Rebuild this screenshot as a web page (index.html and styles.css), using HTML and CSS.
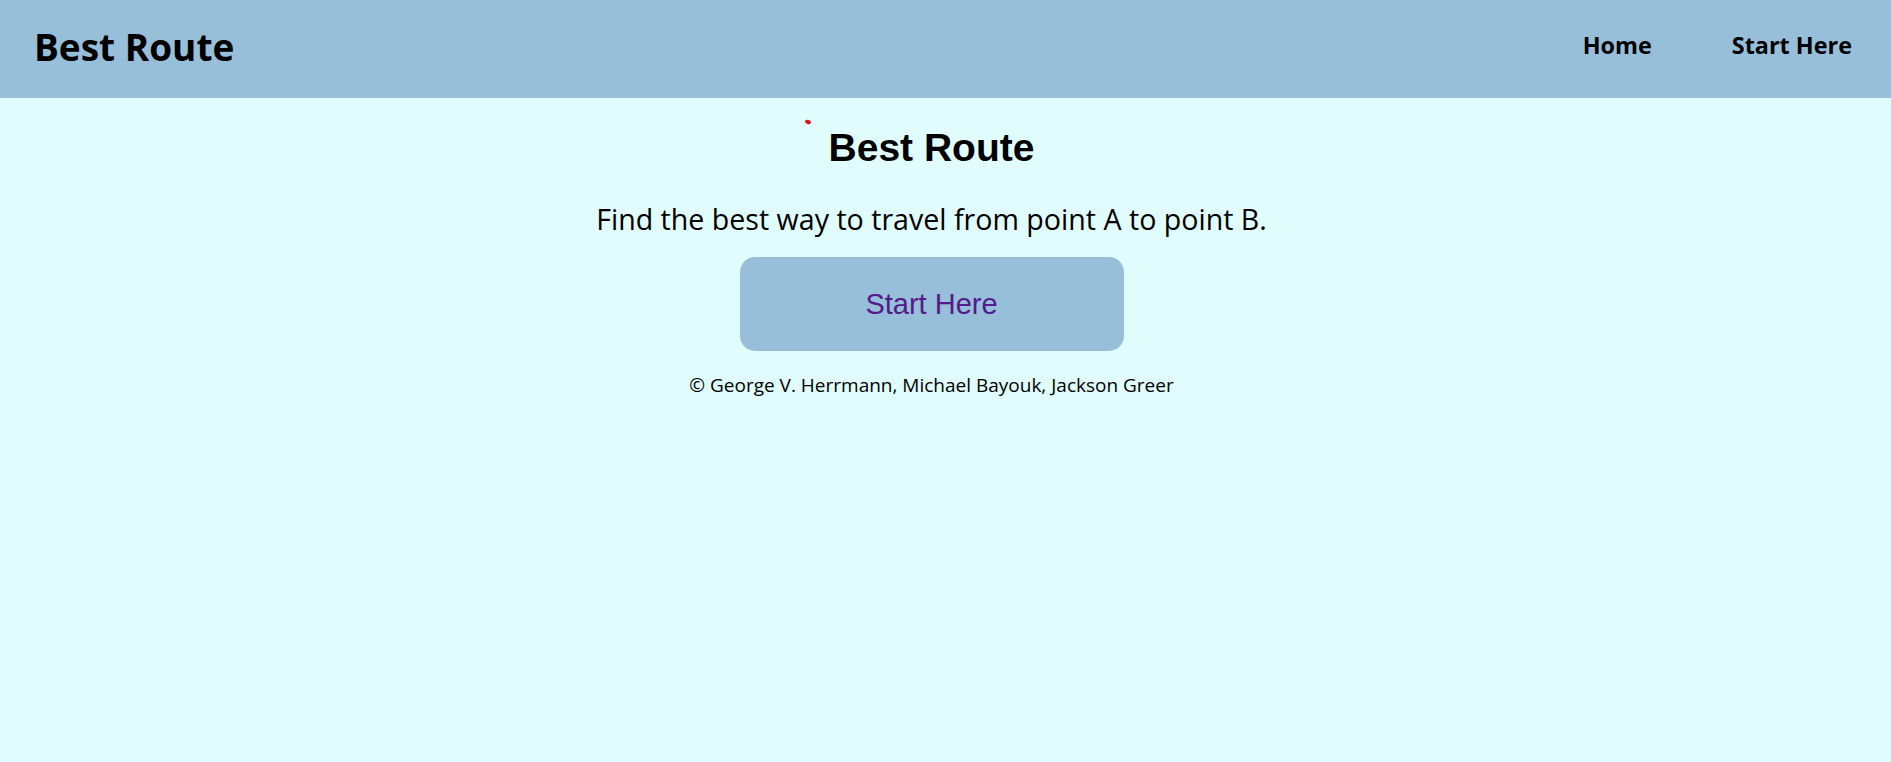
FILE: index.html
```html
<!DOCTYPE html>
<html lang="en">
<head>
<meta charset="utf-8">
<title>Best Route</title>
<link rel="stylesheet" href="styles.css">
</head>
<body>
<header class="topbar">
  <div class="brand">Best Route</div>
  <nav class="nav">
    <a class="nav-link" href="#">Home</a>
    <a class="nav-link" href="#">Start Here</a>
  </nav>
</header>
<main class="hero">
  <h1 class="hero-title"><span class="title-wrap"><span class="logo-dot"></span>Best Route</span></h1>
  <p class="hero-text">Find the best way to travel from point A to point B.</p>
  <a class="cta" href="#">Start Here</a>
  <p class="credits">© George V. Herrmann, Michael Bayouk, Jackson Greer</p>
</main>
</body>
</html>
```
FILE: styles.css
```css
html, body {
  margin: 0;
  padding: 0;
}
body {
  background: #e0fcfd;
  font-family: "Open Sans", "Noto Sans", "DejaVu Sans", sans-serif;
  color: #000;
  min-height: 762px;
}
.topbar {
  height: 98px;
  background: #97bfd9;
  display: flex;
  align-items: center;
  justify-content: space-between;
  padding: 0 39px 0 34px;
  box-sizing: border-box;
}
.brand {
  font-size: 37px;
  font-weight: 700;
  line-height: 1;
  margin-top: -6px;
}
.nav {
  display: flex;
  gap: 80px;
  margin-top: -9px;
}
.nav-link {
  color: #000;
  text-decoration: none;
  font-weight: 700;
  font-size: 23.4px;
}
.hero {
  display: flex;
  flex-direction: column;
  align-items: center;
  padding-right: 28px;
}
.hero-title {
  margin: 28px 0 0;
  font-family: "Liberation Sans", Arial, sans-serif;
  font-size: 39px;
  font-weight: 700;
  line-height: 44px;
}
.title-wrap {
  position: relative;
}
.logo-dot {
  position: absolute;
  left: -24px;
  top: -6px;
  width: 6px;
  height: 4px;
  border-radius: 50%;
  background: #e0141e;
  transform: rotate(20deg);
}
.hero-text {
  margin: 29px 0 0;
  font-size: 28.6px;
  line-height: 40px;
}
.cta {
  margin-top: 18px;
  width: 384px;
  height: 94px;
  border-radius: 15px;
  background: #97bfd9;
  display: flex;
  align-items: center;
  justify-content: center;
  font-family: "Liberation Sans", Arial, sans-serif;
  font-size: 29px;
  color: #551a8b;
  text-decoration: none;
}
.credits {
  margin: 21px 0 0;
  font-size: 19px;
  line-height: 26px;
}
```
